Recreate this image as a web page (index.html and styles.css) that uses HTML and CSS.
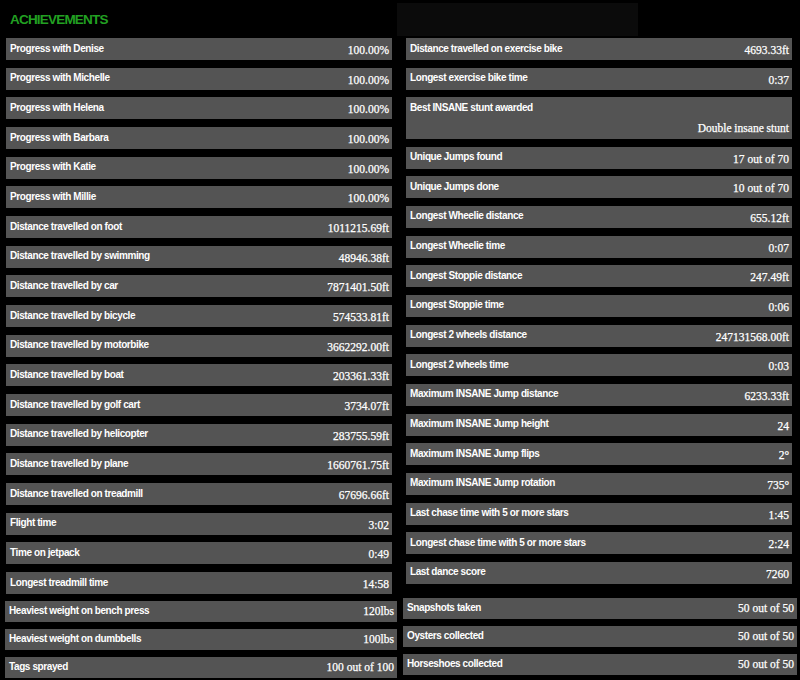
FILE: index.html
```html
<!DOCTYPE html>
<html>
<head>
<meta charset="utf-8">
<link rel="stylesheet" href="styles.css">
</head>
<body>
<header class="top">
  <h1 class="title">ACHIEVEMENTS</h1>
  <div class="shade"></div>
</header>
<main class="cols">
  <section class="col col-left">
    <div class="group">
      <div class="row"><span class="lbl">Progress with Denise</span><span class="val">100.00%</span></div>
      <div class="row"><span class="lbl">Progress with Michelle</span><span class="val">100.00%</span></div>
      <div class="row"><span class="lbl">Progress with Helena</span><span class="val">100.00%</span></div>
      <div class="row"><span class="lbl">Progress with Barbara</span><span class="val">100.00%</span></div>
      <div class="row"><span class="lbl">Progress with Katie</span><span class="val">100.00%</span></div>
      <div class="row"><span class="lbl">Progress with Millie</span><span class="val">100.00%</span></div>
      <div class="row"><span class="lbl">Distance travelled on foot</span><span class="val">1011215.69ft</span></div>
      <div class="row"><span class="lbl">Distance travelled by swimming</span><span class="val">48946.38ft</span></div>
      <div class="row"><span class="lbl">Distance travelled by car</span><span class="val">7871401.50ft</span></div>
      <div class="row"><span class="lbl">Distance travelled by bicycle</span><span class="val">574533.81ft</span></div>
      <div class="row"><span class="lbl">Distance travelled by motorbike</span><span class="val">3662292.00ft</span></div>
      <div class="row"><span class="lbl">Distance travelled by boat</span><span class="val">203361.33ft</span></div>
      <div class="row"><span class="lbl">Distance travelled by golf cart</span><span class="val">3734.07ft</span></div>
      <div class="row"><span class="lbl">Distance travelled by helicopter</span><span class="val">283755.59ft</span></div>
      <div class="row"><span class="lbl">Distance travelled by plane</span><span class="val">1660761.75ft</span></div>
      <div class="row"><span class="lbl">Distance travelled on treadmill</span><span class="val">67696.66ft</span></div>
      <div class="row"><span class="lbl">Flight time</span><span class="val">3:02</span></div>
      <div class="row"><span class="lbl">Time on jetpack</span><span class="val">0:49</span></div>
      <div class="row"><span class="lbl">Longest treadmill time</span><span class="val">14:58</span></div>
    </div>
    <div class="group group-extra extra-left">
      <div class="row row-sm"><span class="lbl">Heaviest weight on bench press</span><span class="val">120lbs</span></div>
      <div class="row row-sm"><span class="lbl">Heaviest weight on dumbbells</span><span class="val">100lbs</span></div>
      <div class="row row-sm"><span class="lbl">Tags sprayed</span><span class="val">100 out of 100</span></div>
    </div>
  </section>
  <section class="col col-right">
    <div class="group">
      <div class="row"><span class="lbl">Distance travelled on exercise bike</span><span class="val">4693.33ft</span></div>
      <div class="row"><span class="lbl">Longest exercise bike time</span><span class="val">0:37</span></div>
      <div class="row row-tall"><span class="lbl">Best INSANE stunt awarded</span><span class="val">Double insane stunt</span></div>
      <div class="row"><span class="lbl">Unique Jumps found</span><span class="val">17 out of 70</span></div>
      <div class="row"><span class="lbl">Unique Jumps done</span><span class="val">10 out of 70</span></div>
      <div class="row"><span class="lbl">Longest Wheelie distance</span><span class="val">655.12ft</span></div>
      <div class="row"><span class="lbl">Longest Wheelie time</span><span class="val">0:07</span></div>
      <div class="row"><span class="lbl">Longest Stoppie distance</span><span class="val">247.49ft</span></div>
      <div class="row"><span class="lbl">Longest Stoppie time</span><span class="val">0:06</span></div>
      <div class="row"><span class="lbl">Longest 2 wheels distance</span><span class="val">247131568.00ft</span></div>
      <div class="row"><span class="lbl">Longest 2 wheels time</span><span class="val">0:03</span></div>
      <div class="row"><span class="lbl">Maximum INSANE Jump distance</span><span class="val">6233.33ft</span></div>
      <div class="row"><span class="lbl">Maximum INSANE Jump height</span><span class="val">24</span></div>
      <div class="row"><span class="lbl">Maximum INSANE Jump flips</span><span class="val">2°</span></div>
      <div class="row"><span class="lbl">Maximum INSANE Jump rotation</span><span class="val">735°</span></div>
      <div class="row"><span class="lbl">Last chase time with 5 or more stars</span><span class="val">1:45</span></div>
      <div class="row"><span class="lbl">Longest chase time with 5 or more stars</span><span class="val">2:24</span></div>
      <div class="row"><span class="lbl">Last dance score</span><span class="val">7260</span></div>
    </div>
    <div class="group group-extra extra-right">
      <div class="row row-sm"><span class="lbl">Snapshots taken</span><span class="val">50 out of 50</span></div>
      <div class="row row-sm"><span class="lbl">Oysters collected</span><span class="val">50 out of 50</span></div>
      <div class="row row-sm"><span class="lbl">Horseshoes collected</span><span class="val">50 out of 50</span></div>
    </div>
  </section>
</main>
</body>
</html>
```
FILE: styles.css
```css
html, body {
  margin: 0;
  padding: 0;
  background: #000;
}
body {
  width: 800px;
  height: 680px;
  overflow: hidden;
  font-family: "Liberation Sans", Arial, sans-serif;
  color: #fff;
}
.top {
  display: grid;
  grid-template-columns: 397px 241px;
  height: 38px;
}
.title {
  margin: 0;
  padding: 12px 0 0 10px;
  font-size: 13.5px;
  line-height: 16px;
  font-weight: bold;
  letter-spacing: -0.8px;
  color: #22a022;
}
.shade {
  margin-top: 3px;
  height: 33px;
  background: #0b0b0b;
}
.cols {
  display: flex;
  gap: 14px;
  padding-left: 6px;
}
.col {
  width: 386px;
  display: flex;
  flex-direction: column;
}
.group {
  display: flex;
  flex-direction: column;
  gap: 7.68px;
}
.row {
  display: flex;
  justify-content: space-between;
  align-items: flex-start;
  height: 22px;
  box-sizing: border-box;
  padding: 0 3px 0 4px;
  background: #545454;
}
.lbl {
  padding-top: 4.5px;
  font-size: 10px;
  line-height: 12px;
  font-weight: bold;
  letter-spacing: -0.4px;
  color: #fff;
  white-space: nowrap;
}
.val {
  padding-top: 6px;
  font-family: "Liberation Serif", "Times New Roman", serif;
  font-size: 11.5px;
  line-height: 12px;
  color: #fff;
  -webkit-text-stroke: 0.25px #fff;
  white-space: nowrap;
}
.row-tall {
  height: 41.5px;
  flex-direction: column;
  justify-content: flex-start;
}
.row-tall .val {
  align-self: flex-end;
  padding-top: 8.5px;
}
.group-extra {
  gap: 7px;
}
.extra-left {
  margin: 6.8px -5px 0 -1px;
}
.extra-right {
  margin: 13.6px -5px 0 -3px;
}
.row-sm {
  height: 21px;
}
.row-sm .val {
  padding-top: 4.5px;
}
```
